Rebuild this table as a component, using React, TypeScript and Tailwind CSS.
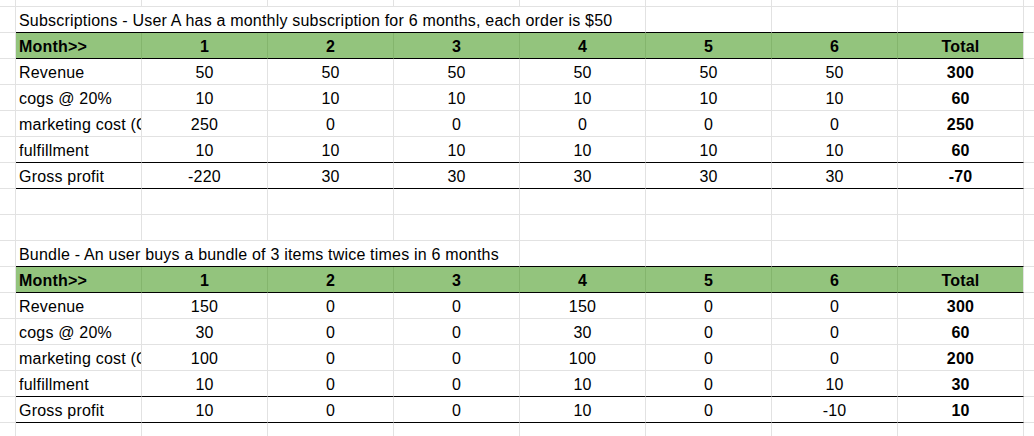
// Unit economics sheet: subscription vs bundle, rendered as a spreadsheet grid

type Line = { label: string; values: number[]; total: number };

const SUBSCRIPTION: Line[] = [
  { label: "Revenue", values: [50, 50, 50, 50, 50, 50], total: 300 },
  { label: "cogs @ 20%", values: [10, 10, 10, 10, 10, 10], total: 60 },
  { label: "marketing cost (CAC)", values: [250, 0, 0, 0, 0, 0], total: 250 },
  { label: "fulfillment", values: [10, 10, 10, 10, 10, 10], total: 60 },
  { label: "Gross profit", values: [-220, 30, 30, 30, 30, 30], total: -70 },
];

const BUNDLE: Line[] = [
  { label: "Revenue", values: [150, 0, 0, 150, 0, 0], total: 300 },
  { label: "cogs @ 20%", values: [30, 0, 0, 30, 0, 0], total: 60 },
  { label: "marketing cost (CAC)", values: [100, 0, 0, 100, 0, 0], total: 200 },
  { label: "fulfillment", values: [10, 0, 0, 10, 0, 10], total: 30 },
  { label: "Gross profit", values: [10, 0, 0, 10, 0, -10], total: 10 },
];

const GRID = "border-[#e2e2e2]";

// 普通单元格：右边 + 底边灰线，文字底对齐（像 Sheets）
function Cell({ children, className = "", dark = false }: { children?: React.ReactNode; className?: string; dark?: boolean }) {
  return (
    <div
      className={`h-[26px] w-[126px] shrink-0 flex items-end px-[3px] pb-[2px] overflow-hidden whitespace-nowrap border-r border-b ${GRID} ${dark ? "!border-b-black" : ""} ${className}`}
    >
      {children}
    </div>
  );
}

function Edge({ h = "h-[26px]" }: { h?: string }) {
  return <div className={`${h} w-[16px] shrink-0 border-r border-b ${GRID}`} />;
}

function Tail({ h = "h-[26px]" }: { h?: string }) {
  return <div className={`${h} flex-1 border-b ${GRID}`} />;
}

function EmptyRow({ h = "h-[26px]" }: { h?: string }) {
  return (
    <div className="flex">
      <Edge h={h} />
      {Array.from({ length: 8 }).map((_, i) => (
        <div key={i} className={`${h} w-[126px] shrink-0 border-r border-b ${GRID}`} />
      ))}
      <Tail h={h} />
    </div>
  );
}

// 标题行：文字溢出跨越 span 列，溢出范围内没有竖线
function TitleRow({ text, span }: { text: string; span: number }) {
  return (
    <div className="flex">
      <Edge />
      <div
        className="h-[26px] shrink-0 flex items-end px-[3px] pb-[2px] whitespace-nowrap border-r border-b border-r-[#e2e2e2] border-b-black"
        style={{ width: span * 126 }}
      >
        {text}
      </div>
      {Array.from({ length: 8 - span }).map((_, i) => (
        <div key={i} className="h-[26px] w-[126px] shrink-0 border-r border-b border-r-[#e2e2e2] border-b-black" />
      ))}
      <Tail />
    </div>
  );
}

function HeaderRow() {
  return (
    <div className="flex font-bold">
      <Edge />
      <div className="h-[26px] w-[126px] shrink-0 flex items-end px-[3px] pb-[2px] bg-[#93c47d] border-r border-b border-r-[#84b56d] border-b-black">
        Month&gt;&gt;
      </div>
      {[1, 2, 3, 4, 5, 6].map((m) => (
        <div
          key={m}
          className="h-[26px] w-[126px] shrink-0 flex items-end justify-center pb-[2px] bg-[#93c47d] border-r border-b border-r-[#84b56d] border-b-black"
        >
          {m}
        </div>
      ))}
      <div className="h-[26px] w-[126px] shrink-0 flex items-end justify-center pb-[2px] bg-[#93c47d] border-r border-b border-r-[#e2e2e2] border-b-black">
        Total
      </div>
      <Tail />
    </div>
  );
}

function DataRow({ line, dark }: { line: Line; dark: boolean }) {
  return (
    <div className="flex">
      <Edge />
      <Cell dark={dark}>{line.label}</Cell>
      {line.values.map((v, i) => (
        <Cell key={i} dark={dark} className="justify-center">
          {v}
        </Cell>
      ))}
      <Cell dark={dark} className="justify-center font-bold">
        {line.total}
      </Cell>
      <Tail />
    </div>
  );
}

function Block({ title, span, lines }: { title: string; span: number; lines: Line[] }) {
  return (
    <>
      <TitleRow text={title} span={span} />
      <HeaderRow />
      {lines.map((l, i) => (
        <DataRow key={l.label} line={l} dark={i >= lines.length - 2} />
      ))}
    </>
  );
}

export default function App() {
  return (
    <div
      className="w-[1034px] h-[436px] overflow-hidden bg-white text-black text-[16px] leading-[18px] tracking-[0.2px]"
      style={{ fontFamily: '"Liberation Sans", Arial, sans-serif' }}
    >
      <EmptyRow h="h-[7px]" />
      <Block title="Subscriptions - User A has a monthly subscription for 6 months, each order is $50" span={5} lines={SUBSCRIPTION} />
      <EmptyRow />
      <EmptyRow />
      <Block title="Bundle - An user buys a bundle of 3 items twice times in 6 months" span={4} lines={BUNDLE} />
      <EmptyRow h="h-[14px]" />
    </div>
  );
}
